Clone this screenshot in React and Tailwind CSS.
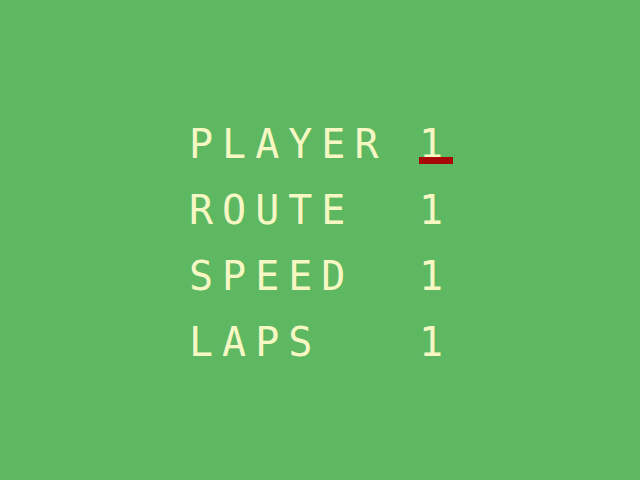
const rows = [
  { label: "PLAYER", value: "1", selected: true },
  { label: "ROUTE", value: "1" },
  { label: "SPEED", value: "1" },
  { label: "LAPS", value: "1" },
];

export default function App() {
  return (
    <div className="w-[640px] h-[480px] bg-[#5eb862] flex items-center justify-center overflow-hidden">
      <div
        className="grid grid-cols-[230px_auto] auto-rows-[66px] items-center text-[40px] tracking-[9px] text-[#f7f7c4] leading-none ml-[2px] mt-[6px]"
        style={{ fontFamily: '"DejaVu Sans Mono", monospace' }}
      >
        {rows.map((r) => (
          <div key={r.label} className="contents">
            <span>{r.label}</span>
            <span className="relative inline-block w-[34px]">
              {r.value}
              {r.selected && (
                <span className="absolute left-[0px] top-[33px] w-[34px] h-[7px] bg-[#a80808]" />
              )}
            </span>
          </div>
        ))}
      </div>
    </div>
  );
}
